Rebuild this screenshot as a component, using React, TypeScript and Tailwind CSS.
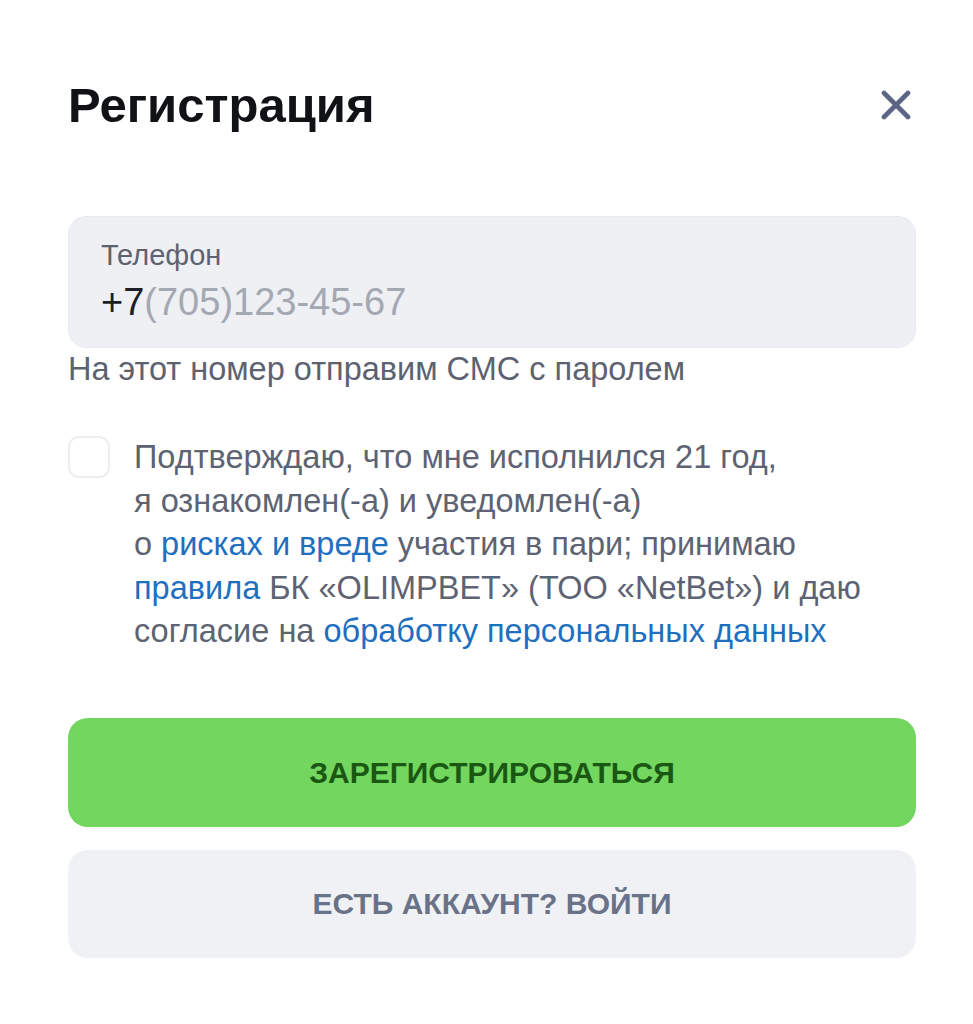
import React from "react";

function CloseIcon() {
  return (
    <svg width="30" height="30" viewBox="0 0 30 30" fill="none" aria-hidden>
      <path d="M3 3L27 27M27 3L3 27" stroke="#5b6482" strokeWidth="4.6" strokeLinecap="round" />
    </svg>
  );
}

export default function App() {
  return (
    <div
      className="min-h-screen w-full bg-white pl-[68px] pr-[57px] pt-[77px]"
      style={{ fontFamily: '"Liberation Sans", Arial, sans-serif' }}
    >
      <div className="flex h-[56px] items-center justify-between">
        <h1 className="text-[49px] font-bold leading-[56px] text-[#111216]">Регистрация</h1>
        <button type="button" aria-label="Закрыть" className="mr-[5px] grid h-[30px] w-[30px] place-items-center">
          <CloseIcon />
        </button>
      </div>

      <div className="mt-[83px] rounded-[18px] border border-[#e8eaef] bg-[#eff0f4] px-[32px] pb-[23px] pt-[23px]">
        <div className="text-[29px] leading-[30px] text-[#5e6370]">Телефон</div>
        <div className="mt-[10px] text-[38px] leading-[44px]">
          <span className="text-[#1d1f26]">+7</span>
          <span className="text-[#a4a8b2]">(705)123-45-67</span>
        </div>
      </div>
      <p className="text-[32.5px] leading-[42px] text-[#5d6270]">На этот номер отправим СМС с паролем</p>

      <div className="mt-[46px] flex items-start gap-[24px]">
        <div className="h-[42px] w-[42px] shrink-0 rounded-[11px] border-2 border-[#eceef2] bg-white" />
        <p className="text-[32.5px] leading-[43.5px] text-[#5d6372]">
          Подтверждаю, что мне исполнился 21 год,
          <br />я ознакомлен(-а) и уведомлен(-а)
          <br />о <span className="text-[#1f6fbf]">рисках и вреде</span> участия в пари; принимаю
          <br />
          <span className="text-[#1f6fbf]">правила</span> БК «OLIMPBET» (ТОО «NetBet») и даю
          <br />
          согласие на <span className="text-[#1f6fbf]">обработку персональных данных</span>
        </p>
      </div>

      <button
        type="button"
        className="mt-[64px] flex h-[109px] w-full items-center justify-center rounded-[20px] bg-[#72d65f] text-[30px] font-bold text-[#1a5712]"
      >
        ЗАРЕГИСТРИРОВАТЬСЯ
      </button>
      <button
        type="button"
        className="mt-[23px] flex h-[108px] w-full items-center justify-center rounded-[20px] bg-[#f0f1f5] text-[30px] font-bold text-[#6a7288]"
      >
        ЕСТЬ АККАУНТ? ВОЙТИ
      </button>
    </div>
  );
}
